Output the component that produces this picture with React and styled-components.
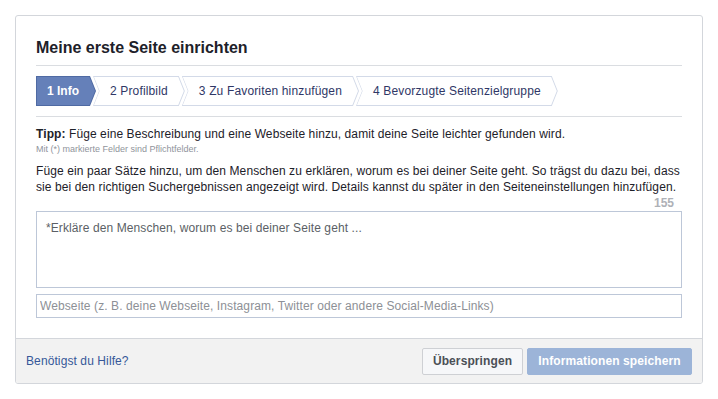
import React from "react";
import styled, { createGlobalStyle } from "styled-components";

const Global = createGlobalStyle`
  html, body { margin: 0; padding: 0; background: #fff; }
  body { font-family: "Liberation Sans", Arial, sans-serif; color: #1d2129; }
  * { box-sizing: border-box; }
`;

const Page = styled.div`
  padding: 15px;
  width: 718px;
`;

const Card = styled.div`
  width: 688px;
  border: 1px solid #d3d6db;
  border-radius: 3px;
  background: #fff;
  overflow: hidden;
`;

const Body = styled.div`
  padding: 22px 20px 20px 20px;
`;

const Title = styled.h2`
  margin: 0;
  font-size: 16px;
  line-height: 20px;
  font-weight: bold;
  color: #1d2129;
  padding-bottom: 7px;
  border-bottom: 1px solid #dadde1;
`;

const StepsRow = styled.div`
  display: flex;
  margin-top: 10px;
  padding-bottom: 10px;
  border-bottom: 1px solid #dadde1;
`;

const D = 6;

const Step = styled.div`
  position: relative;
  height: 30px;
  display: flex;
  align-items: center;
  font-size: 12px;
  letter-spacing: ${(p) => (p.$active ? "0" : "0.15px")};
  font-weight: ${(p) => (p.$active ? "bold" : "normal")};
  color: ${(p) => (p.$active ? "#fff" : "#2f3766")};
  padding: ${(p) => (p.$first ? "0 17px 0 11px" : "0 17px 0 17px")};
  margin-left: ${(p) => (p.$first ? "0" : "-3px")};
  background: ${(p) => (p.$active ? "#4f6aa3" : "#d3dae8")};
  clip-path: ${(p) =>
    p.$first
      ? `polygon(0 0, calc(100% - ${D}px) 0, 100% 50%, calc(100% - ${D}px) 100%, 0 100%)`
      : `polygon(0 0, calc(100% - ${D}px) 0, 100% 50%, calc(100% - ${D}px) 100%, 0 100%, ${D}px 50%)`};
  white-space: nowrap;

  &::before {
    content: "";
    position: absolute;
    inset: 1px;
    background: ${(p) => (p.$active ? "#6580b9" : "#fff")};
    clip-path: ${(p) =>
      p.$first
        ? `polygon(0 0, calc(100% - ${D - 0.4}px) 0, 100% 50%, calc(100% - ${D - 0.4}px) 100%, 0 100%)`
        : `polygon(0 0, calc(100% - ${D - 0.4}px) 0, 100% 50%, calc(100% - ${D - 0.4}px) 100%, 0 100%, ${D - 0.4}px 50%)`};
  }
`;

const StepLabel = styled.span`
  position: relative;
`;

const Tip = styled.p`
  margin: 9px 0 0;
  font-size: 12px;
  line-height: 16px;
  letter-spacing: 0.09px;
  b { font-weight: bold; }
`;

const Small = styled.p`
  margin: 1px 0 0;
  font-size: 9px;
  line-height: 12px;
  color: #90949c;
`;

const Para = styled.p`
  margin: 8px 0 0;
  font-size: 12px;
  line-height: 16px;
  letter-spacing: 0.1px;
  color: #1d2129;
`;

const Counter = styled.div`
  text-align: right;
  padding-right: 8px;
  font-size: 12px;
  line-height: 16px;
  font-weight: bold;
  color: #aeb1b7;
`;

const TextArea = styled.textarea`
  display: block;
  width: 100%;
  height: 77px;
  margin: 0;
  border: 1px solid #bdc7d8;
  border-radius: 0;
  padding: 8px 9px;
  font-family: inherit;
  font-size: 12px;
  line-height: 16px;
  letter-spacing: 0.1px;
  resize: none;
  outline: none;
  &::placeholder { color: #5b5f66; opacity: 1; }
`;

const Input = styled.input`
  display: block;
  width: 100%;
  height: 24px;
  margin-top: 6px;
  border: 1px solid #bdc7d8;
  border-radius: 0;
  padding: 0 3px;
  font-family: inherit;
  font-size: 12px;
  letter-spacing: 0.1px;
  outline: none;
  &::placeholder { color: #8d9096; opacity: 1; }
`;

const Footer = styled.div`
  display: flex;
  align-items: center;
  justify-content: space-between;
  height: 45px;
  padding: 0 10px;
  background: #f2f2f2;
  border-top: 1px solid #d3d6db;
`;

const HelpLink = styled.a`
  font-size: 12px;
  letter-spacing: 0.1px;
  color: #365899;
  text-decoration: none;
  cursor: pointer;
`;

const Buttons = styled.div`
  display: flex;
  gap: 4px;
`;

const Button = styled.button`
  height: 27px;
  padding: 0;
  border-radius: 2px;
  font-family: inherit;
  font-size: 12px;
  font-weight: bold;
  letter-spacing: 0.1px;
  white-space: nowrap;
  border: 1px solid ${(p) => (p.$primary ? "#9cb4d8" : "#ced0d4")};
  background: ${(p) => (p.$primary ? "#9cb4d8" : "#f6f7f9")};
  color: ${(p) => (p.$primary ? "#fff" : "#4b4f56")};
  width: ${(p) => p.$w}px;
`;

const steps = [
  "1 Info",
  "2 Profilbild",
  "3 Zu Favoriten hinzufügen",
  "4 Bevorzugte Seitenzielgruppe",
];

export default function App() {
  return (
    <>
      <Global />
      <Page>
        <Card>
          <Body>
            <Title>Meine erste Seite einrichten</Title>
            <StepsRow>
              {steps.map((s, i) => (
                <Step key={s} $first={i === 0} $active={i === 0}>
                  <StepLabel>{s}</StepLabel>
                </Step>
              ))}
            </StepsRow>
            <Tip>
              <b>Tipp:</b> Füge eine Beschreibung und eine Webseite hinzu, damit deine Seite leichter gefunden wird.
            </Tip>
            <Small>Mit (*) markierte Felder sind Pflichtfelder.</Small>
            <Para>
              Füge ein paar Sätze hinzu, um den Menschen zu erklären, worum es bei deiner Seite geht. So trägst du dazu bei, dass
              <br />
              sie bei den richtigen Suchergebnissen angezeigt wird. Details kannst du später in den Seiteneinstellungen hinzufügen.
            </Para>
            <Counter>155</Counter>
            <TextArea placeholder="*Erkläre den Menschen, worum es bei deiner Seite geht ..." />
            <Input placeholder="Webseite (z. B. deine Webseite, Instagram, Twitter oder andere Social-Media-Links)" />
          </Body>
          <Footer>
            <HelpLink>Benötigst du Hilfe?</HelpLink>
            <Buttons>
              <Button $w={101}>Überspringen</Button>
              <Button $primary $w={165}>Informationen speichern</Button>
            </Buttons>
          </Footer>
        </Card>
      </Page>
    </>
  );
}
